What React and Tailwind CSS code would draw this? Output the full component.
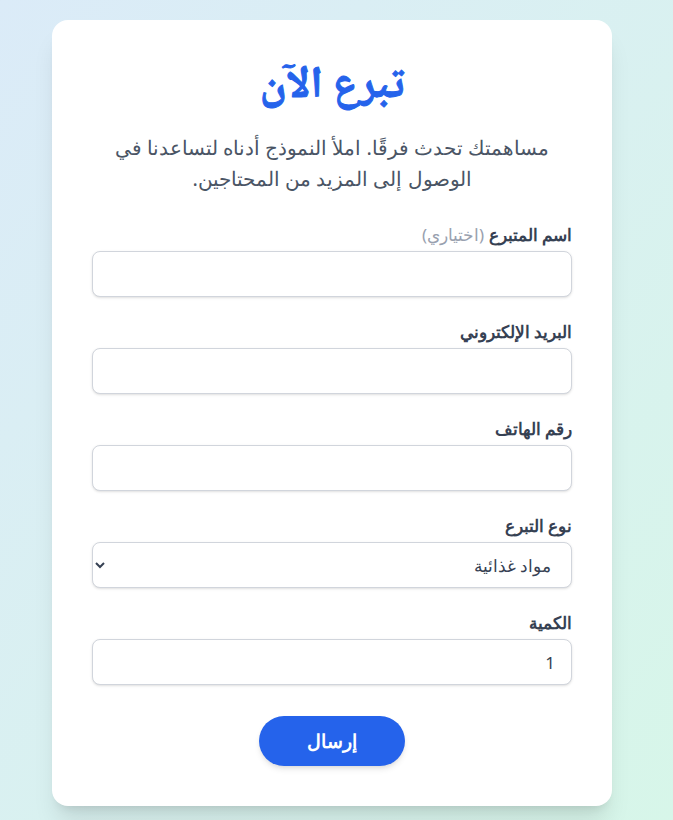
import React from 'react';

const Field = ({ label, optional, children }) => (
  <div>
    <label className="block mb-1 text-[17px] font-semibold text-gray-700 leading-6">
      {label}
      {optional && <span className="font-normal text-gray-400"> (اختياري)</span>}
    </label>
    {children}
  </div>
);

const inputCls =
  'w-full h-[46px] px-4 rounded-lg border border-gray-300 bg-white text-[17px] text-gray-700 shadow-sm outline-none';

export default function App() {
  return (
    <div className="min-h-screen bg-gradient-to-br from-[#dbebf8] to-[#d7f6e9] pt-5 pb-4">
      <div dir="rtl" className="w-[560px] ml-[52px] bg-white rounded-2xl shadow-xl px-10 pt-10 pb-10">
        <h1
          className="text-center text-[44px] font-bold text-[#2563eb] leading-[56px] [-webkit-text-stroke:1px_#2563eb]"
          style={{ fontFamily: '"Noto Naskh Arabic", "Liberation Sans", serif' }}
        >
          تبرع الآن
        </h1>
        <p className="mt-4 mx-auto max-w-[450px] text-center text-[20px] text-gray-600 leading-[31px]">
          مساهمتك تحدث فرقًا. املأ النموذج أدناه لتساعدنا في الوصول إلى المزيد من المحتاجين.
        </p>

        <form className="mt-[29px] space-y-[23px]" onSubmit={(e) => e.preventDefault()}>
          <Field label="اسم المتبرع" optional>
            <input type="text" className={inputCls} />
          </Field>
          <Field label="البريد الإلكتروني">
            <input type="email" className={inputCls} />
          </Field>
          <Field label="رقم الهاتف">
            <input type="tel" className={inputCls} />
          </Field>
          <Field label="نوع التبرع">
            <select className={inputCls} defaultValue="food">
              <option value="food">مواد غذائية</option>
              <option value="clothes">ملابس</option>
              <option value="money">تبرع مالي</option>
            </select>
          </Field>
          <Field label="الكمية">
            <input type="number" defaultValue={1} min={1} className={inputCls} />
          </Field>

          <div className="flex justify-center pt-2">
            <button
              type="submit"
              className="h-[50px] w-[146px] rounded-full bg-[#2563eb] text-white text-[19px] font-bold shadow-md"
            >
              إرسال
            </button>
          </div>
        </form>
      </div>
    </div>
  );
}
